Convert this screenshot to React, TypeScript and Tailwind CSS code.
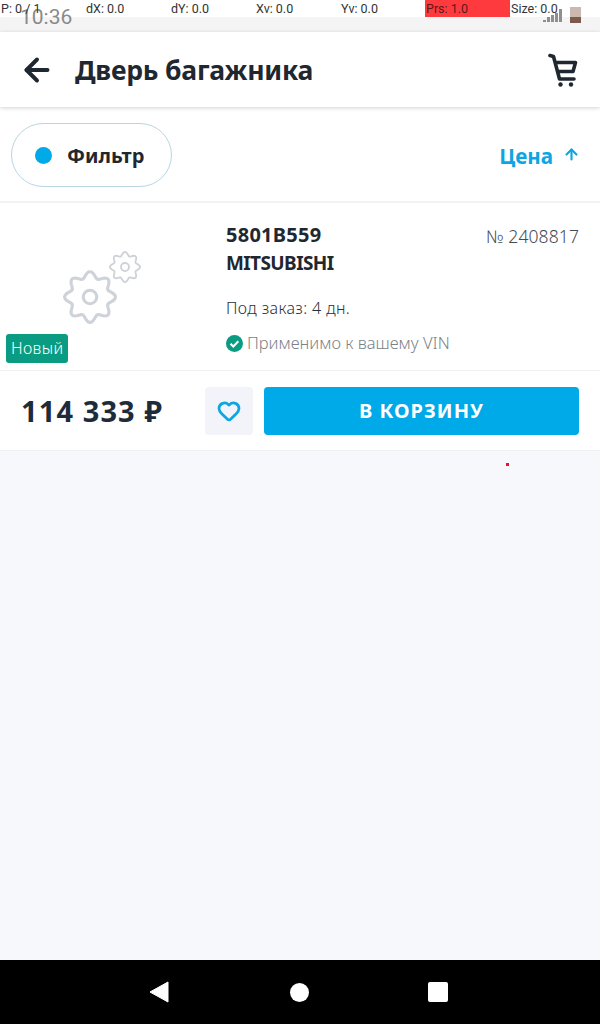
import { ArrowLeft, ArrowUp, Heart } from "lucide-react";

const pointerStats = [
  { label: "P: 0 / 1", width: "w-[85px]" },
  { label: "dX: 0.0", width: "w-[85px]" },
  { label: "dY: 0.0", width: "w-[85px]" },
  { label: "Xv: 0.0", width: "w-[85px]" },
  { label: "Yv: 0.0", width: "w-[85px]" },
  { label: "Prs: 1.0", width: "w-[85px] bg-[#ff3a3f] text-[#5a1a1c]" },
  { label: "Size: 0.0", width: "w-[90px]" },
];

// wavy 8-lobed outline
const gearPath = Array.from({ length: 97 }, (_, i) => {
  const a = (i / 96) * Math.PI * 2;
  const r = 21.5 + 3 * Math.cos(a * 8);
  const x = 26 + r * Math.sin(a);
  const y = 26 - r * Math.cos(a);
  return `${i === 0 ? "M" : "L"}${x.toFixed(2)} ${y.toFixed(2)}`;
}).join("");

const Gear = ({ className }: { className: string }) => (
  <svg viewBox="0 0 52 52" fill="none" stroke="#ced3d9" strokeWidth="3" className={className}>
    <path d={gearPath} strokeLinejoin="round" />
    <circle cx="26" cy="26" r="6.5" />
  </svg>
);

export default function App() {
  return (
    <div className="relative flex flex-col h-[1024px] w-[600px] overflow-hidden bg-[#f7f8fc] font-['Noto_Sans',sans-serif] text-[#1f2730]">
      {/* pointer location overlay */}
      <div className="absolute top-0 left-0 z-10 flex h-[17px] w-full text-[12.500px] leading-[17px] text-[#333] font-['Roboto',sans-serif]">
        {pointerStats.map((s) => (
          <div key={s.label} className={`${s.width} pl-[1px]`}>
            {s.label}
          </div>
        ))}
      </div>

      <div className="flex h-[32px] items-start justify-between bg-[linear-gradient(#ffffff_17px,#f4f4f4_17px)] pl-[20px] pr-[19px] pt-[4px]">
        <span className="font-['Roboto',sans-serif] text-[21px] leading-[26px] text-[#8a8a8a]">10:36</span>
        <div className="flex items-end gap-[8px] pt-[3px]">
          <div className="mb-[1px] flex items-end gap-[1px]">
            {[2, 5, 7, 9, 13].map((h) => (
              <div key={h} className="w-[3px] bg-[#8f8f8f]" style={{ height: h }} />
            ))}
          </div>
          <div className="flex h-[16px] w-[11px] flex-col justify-end bg-[#cbb9b1]">
            <div className="h-[6px] bg-[#7d5a4e]" />
          </div>
        </div>
      </div>

      <header className="z-[1] flex h-[75px] items-center bg-white pl-[19px] pr-[22px] shadow-[0_1px_4px_rgba(0,0,0,0.18)]">
        <ArrowLeft className="h-[36px] w-[36px] text-[#1f2730]" strokeWidth={2.600} />
        <h1 className="ml-[20px] flex-1 pt-[2px] text-[26.500px] font-bold tracking-[-0.2px]">Дверь багажника</h1>
        <svg viewBox="0 0 30 34" fill="none" className="h-[34px] w-[30px]">
          <path d="M2 2.500l3.500 1L11.500 26H26M8 9.500h19.500l-2.500 9H10" stroke="#1f2730" strokeWidth="3.600" strokeLinecap="round" strokeLinejoin="round" />
          <circle cx="12.500" cy="31.500" r="2.200" fill="#1f2730" />
          <circle cx="23" cy="31.500" r="2.200" fill="#1f2730" />
        </svg>
      </header>

      <div className="flex h-[96px] items-center justify-between border-b-2 border-[#f2f3f6] bg-white pl-[11px] pr-[20px] pt-[2px]">
        <div className="flex h-[64px] w-[161px] items-center rounded-full border border-[#b9d6e2] pl-[23px]">
          <span className="h-[17px] w-[17px] rounded-full bg-[#00a9e8]" />
          <span className="ml-[15px] pt-[1px] text-[20px] font-bold">Фильтр</span>
        </div>
        <div className="flex items-center text-[#0da6e2]">
          <span className="pt-[2px] text-[20.600px] font-bold">Цена</span>
          <ArrowUp className="ml-[10px] h-[17px] w-[17px]" strokeWidth={3} />
        </div>
      </div>

      <section className="flex h-[168px] border-b border-[#eef0f4] bg-white">
        <div className="relative w-[226px] shrink-0">
          <Gear className="absolute left-[63px] top-[67px] h-[54px] w-[54px]" />
          <Gear className="absolute left-[109px] top-[48px] h-[32px] w-[32px]" />
          <span className="absolute left-[6px] top-[131px] rounded-[3px] bg-[#0a9c82] px-[5px] text-[16px] leading-[29px] font-light tracking-[0.4px] text-white">
            Новый
          </span>
        </div>
        <div className="flex flex-1 flex-col pr-[21px] pt-[18px]">
          <div className="flex justify-between">
            <div className="text-[20px] font-bold leading-[28px]">
              <div className="tracking-[0.25px]">5801B559</div>
              <div className="text-[19px] tracking-[-0.6px]">MITSUBISHI</div>
            </div>
            <div className="pt-[1px] text-[17.500px] font-light leading-[28px] tracking-[0.1px] text-[#444b53]">№ 2408817</div>
          </div>
          <div className="mt-[19px] text-[16px] font-light leading-[24px] tracking-[0.4px] text-[#2b3036]">Под заказ: 4 дн.</div>
          <div className="mt-[11px] flex items-center text-[16.500px] font-light leading-[24px] text-[#7b8289]">
            <svg viewBox="0 0 17 17" className="mr-[4px] h-[17px] w-[17px]">
              <circle cx="8.500" cy="8.500" r="8.500" fill="#0a9c82" />
              <path d="M4.500 8.800l2.800 2.700 5-5.200" fill="none" stroke="white" strokeWidth="2" />
            </svg>
            Применимо к вашему VIN
          </div>
        </div>
      </section>

      <section className="flex h-[80px] items-center border-b border-[#eef0f4] bg-white pl-[21px] pr-[21px]">
        <div className="flex-1 text-[29px] font-bold tracking-[1.100px] text-[#1e2b3a]">114 333 ₽</div>
        <button className="flex h-[48px] w-[48px] items-center justify-center rounded-[4px] bg-[#f2f4f9]">
          <Heart className="h-[24px] w-[24px] text-[#0da6e2]" strokeWidth={2.750} />
        </button>
        <button className="ml-[11px] h-[48px] w-[315px] rounded-[4px] bg-[#00a9e8] pt-[1px] text-[20px] font-bold tracking-[1px] text-white">
          В КОРЗИНУ
        </button>
      </section>

      <div className="relative flex-1">
        <span className="absolute left-[506px] top-[12px] h-[3px] w-[3px] bg-[#e8122c]" />
      </div>

      <nav className="flex h-[64px] items-center bg-black pl-[149px]">
        <svg viewBox="0 0 20 22" className="h-[22px] w-[20px]">
          <path d="M19 1v20L1 11z" fill="white" stroke="white" strokeLinejoin="round" />
        </svg>
        <span className="ml-[121px] h-[19px] w-[19px] rounded-full bg-white" />
        <span className="ml-[119px] h-[20px] w-[20px] rounded-[2px] bg-white" />
      </nav>
    </div>
  );
}
